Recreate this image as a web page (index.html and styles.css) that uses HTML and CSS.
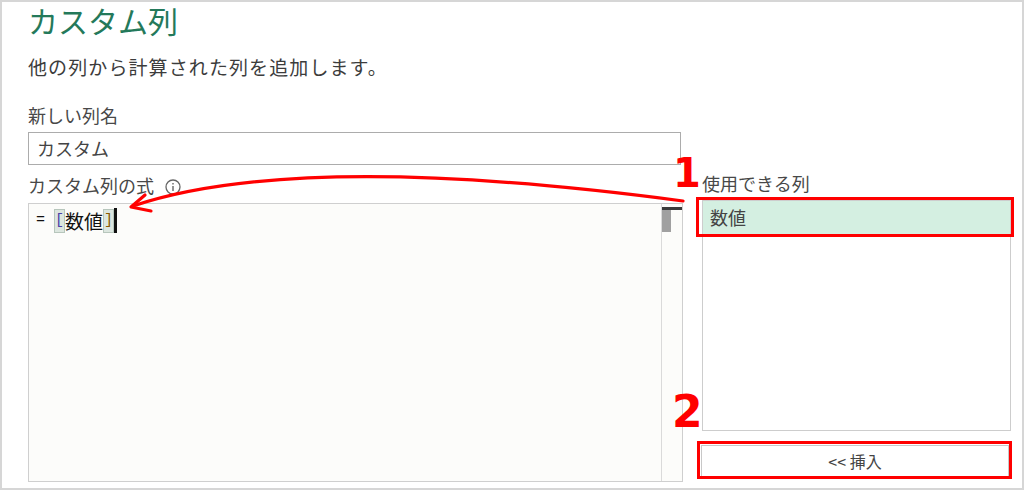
FILE: index.html
```html
<!DOCTYPE html>
<html lang="ja">
<head>
  <meta charset="UTF-8">
  <title>カスタム列</title>
  <link rel="stylesheet" href="styles.css">
</head>
<body>
  <div class="dialog">
    <h1 class="title">カスタム列</h1>
    <p class="desc">他の列から計算された列を追加します。</p>

    <div class="main">
      <div class="left">
        <div class="label">新しい列名</div>
        <div class="name-input">カスタム</div>

        <div class="label formula-label">
          カスタム列の式
          <svg class="info" width="16" height="16" viewBox="0 0 16 16">
            <circle cx="8" cy="8" r="7" fill="none" stroke="#666" stroke-width="1.3"/>
            <rect x="7.3" y="7" width="1.4" height="5" fill="#666"/>
            <rect x="7.3" y="4" width="1.4" height="1.5" fill="#666"/>
          </svg>
        </div>
        <div class="editor">
          <div class="code">
            <span class="eq">=</span>
            <span class="br br-open">[</span><span class="ref">数値</span><span class="br br-close">]</span><span class="caret"></span>
          </div>
          <div class="scroll">
            <div class="scroll-cap"></div>
            <div class="scroll-thumb"></div>
          </div>
        </div>
      </div>

      <div class="right">
        <span class="step step-1">1</span>
        <div class="label">使用できる列</div>
        <div class="col-list">
          <div class="col-item marked">数値</div>
        </div>
        <span class="step step-2">2</span>
        <button class="insert-btn marked">&lt;&lt; 挿入</button>
      </div>
    </div>

    <!-- annotation arrow from the column list to the formula -->
    <svg class="arrow" width="1024" height="490" viewBox="0 0 1024 490">
      <path d="M683 201 Q300 150 133 206" fill="none" stroke="#f00" stroke-width="3.2" stroke-linecap="round"/>
      <polyline points="145,195 131,207 151,211" fill="none" stroke="#f00" stroke-width="3.2" stroke-linecap="round" stroke-linejoin="round"/>
    </svg>
  </div>
</body>
</html>
```

FILE: styles.css
```css
* {
  box-sizing: border-box;
}

body {
  margin: 0;
  background: #fff;
  font-family: "Noto Sans CJK JP", "Noto Sans", sans-serif;
  color: #444;
}

.dialog {
  position: relative;
  width: 1024px;
  height: 490px;
  border: 2px solid #d6d6d6;
  padding-left: 26px;
  padding-top: 2px;
}

.title {
  margin: 0;
  font-size: 30px;
  line-height: 32px;
  font-weight: normal;
  color: #24795a;
}

.desc {
  margin: 19px 0 0;
  font-size: 19px;
  line-height: 24px;
  letter-spacing: 1.1px;
  color: #3c3c3c;
}

.main {
  display: flex;
  gap: 18px;
  margin-top: 24px;
}

.label {
  font-size: 18px;
  line-height: 24px;
  color: #484848;
}

.left {
  width: 655px;
  display: flex;
  flex-direction: column;
}

.name-input {
  width: 653px;
  height: 33px;
  margin-top: 5px;
  border: 1px solid #acacac;
  padding-left: 8px;
  font-size: 18px;
  line-height: 30px;
  color: #444;
}

.formula-label {
  margin-top: 8px;
  display: flex;
  align-items: center;
}

.info {
  margin-left: 11px;
  margin-top: 3px;
}

.editor {
  margin-top: 6px;
  height: 279px;
  border: 1px solid #cfcfcf;
  background: #fcfcfa;
  display: flex;
}

.code {
  flex: 1;
  padding: 3px 0 0 7px;
  height: 30px;
  display: flex;
  align-items: center;
  font-size: 19px;
  color: #111;
}

.eq {
  font-family: "Liberation Mono", monospace;
  font-size: 15px;
  margin-right: 9px;
}

.br {
  font-family: "Liberation Mono", monospace;
  font-size: 15px;
  line-height: 22px;
  background: #dce6df;
  border: 1px solid #b7c6bc;
}

.br-open {
  color: #4b3fa8;
}

.br-close {
  color: #8a5a00;
}

.ref {
  line-height: 22px;
}

.caret {
  display: inline-block;
  width: 3px;
  height: 25px;
  background: #111;
}

.scroll {
  width: 21px;
  border-left: 1px solid #dadada;
  padding-top: 3px;
}

.scroll-cap {
  height: 3px;
  background: #3a3a3a;
}

.scroll-thumb {
  width: 9px;
  height: 22px;
  background: #a0a0a0;
}

.right {
  position: relative;
  width: 310px;
  padding-top: 68px;
  display: flex;
  flex-direction: column;
}

.right .label {
  margin-left: 1px;
}

.col-list {
  margin-top: 5px;
  margin-left: 1px;
  width: 309px;
  height: 231px;
  border: 1px solid #cdcdcd;
  background: #fff;
}

.col-item {
  position: relative;
  height: 33px;
  padding-left: 7px;
  background: #d4efe1;
  font-size: 18px;
  line-height: 32px;
  color: #444;
}

.insert-btn {
  position: relative;
  margin-top: 14px;
  width: 308px;
  height: 32px;
  border: 1px solid #c8c8c8;
  background: #fff;
  font-family: inherit;
  font-size: 16px;
  color: #444;
  padding: 0;
}

/* red annotation frames */
.col-item.marked::after,
.insert-btn.marked::after {
  content: "";
  position: absolute;
  border: 3.5px solid #f00;
}

.col-item.marked::after {
  left: -7px;
  right: -4px;
  top: -4px;
  bottom: -3px;
}

.insert-btn.marked::after {
  left: -5px;
  right: -4px;
  top: -5px;
  bottom: -3px;
}

.step {
  position: absolute;
  font-family: "DejaVu Sans", sans-serif;
  font-weight: bold;
  line-height: 1;
  color: #f00;
}

.step-1 {
  font-size: 40px;
  top: 50px;
  left: -28px;
}

.step-2 {
  font-size: 44px;
  top: 287px;
  left: -29px;
}

.arrow {
  position: absolute;
  top: -2px;
  left: -2px;
  pointer-events: none;
}
```
